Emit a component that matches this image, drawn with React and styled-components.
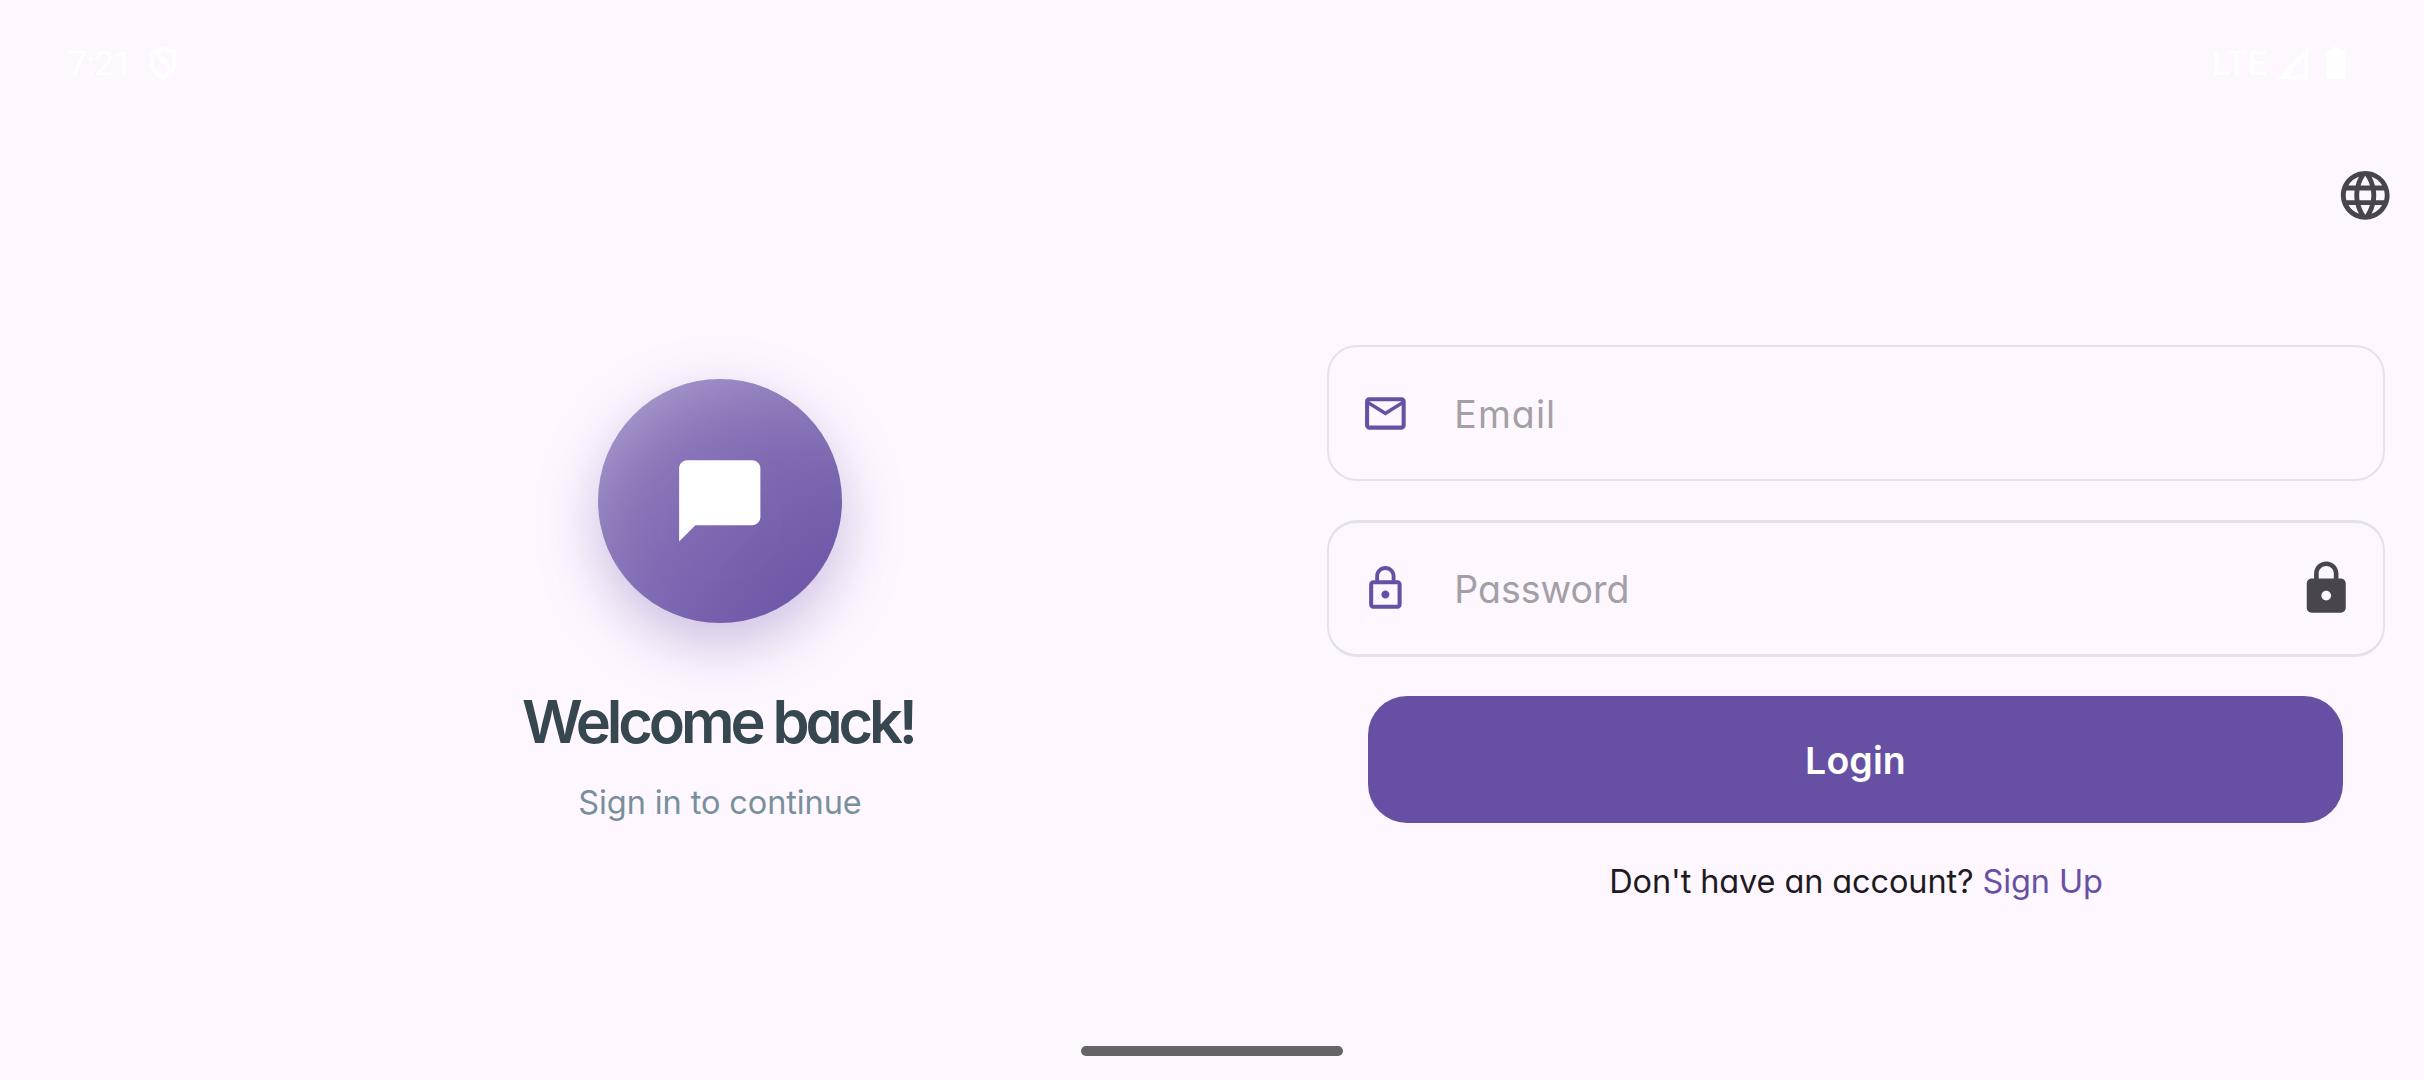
import React from "react";
import styled, { createGlobalStyle } from "styled-components";
import { MdChatBubble, MdLanguage, MdLock, MdLockOutline, MdMailOutline } from "react-icons/md";

const GlobalStyle = createGlobalStyle`
  *, *::before, *::after { box-sizing: border-box; }
  body { margin: 0; background: #fef7ff; }
`;

const Screen = styled.div`
  display: flex;
  flex-direction: column;
  width: 2424px;
  height: 1080px;
  overflow: hidden;
  background: #fef7ff;
  font-family: Inter, "Open Sans", sans-serif;
  font-feature-settings: "cv11" 1;
`;

const StatusBar = styled.header`
  display: flex;
  justify-content: space-between;
  align-items: center;
  height: 126px;
  padding: 0 79px 0 68px;
  color: #fff;
  font-family: Roboto, sans-serif;
  font-size: 34px;
  line-height: 40px;
`;

const StatusGroup = styled.div`
  display: flex;
  align-items: center;
  gap: ${(p) => p.$gap}px;
`;

const StatusText = styled.span`
  font-weight: ${(p) => p.$weight || 400};
  letter-spacing: ${(p) => p.$spacing || 0}px;
`;

const Toolbar = styled.div`
  display: flex;
  justify-content: flex-end;
  align-items: center;
  height: 139px;
  padding-right: 29.5px;
`;

const IconButton = styled.button`
  display: flex;
  padding: 0;
  border: 0;
  background: none;
  color: #49454f;
`;

const Main = styled.main`
  display: grid;
  grid-template-columns: 1214px 1058px;
  padding-left: 113px;
`;

const Welcome = styled.section`
  display: flex;
  flex-direction: column;
  align-items: center;
  padding-top: 114px;
`;

const Logo = styled.div`
  position: relative;
  isolation: isolate;
  display: flex;
  align-items: center;
  justify-content: center;
  width: 244px;
  height: 244px;
  border-radius: 50%;
  color: #fff;
  background: linear-gradient(135deg, rgba(103, 80, 164, 0.5), rgb(103, 80, 164));

  &::before {
    content: "";
    position: absolute;
    z-index: -1;
    inset: 21px 0 -21px;
    border-radius: 50%;
    background: rgba(103, 80, 164, 0.34);
    filter: blur(30px);
  }
`;

const Title = styled.h1`
  margin: 59px 0 0;
  color: #37474f;
  font-size: 59.5px;
  font-weight: 600;
  line-height: 78px;
  letter-spacing: ${(p) => p.$spacing}px;
  text-indent: ${(p) => p.$spacing}px;
  white-space: nowrap;
`;

const Subtitle = styled.p`
  margin: 21px 0 0;
  color: #78909c;
  font-size: 32.5px;
  line-height: 44px;
  letter-spacing: ${(p) => p.$spacing}px;
  white-space: nowrap;
`;

const Form = styled.section`
  display: flex;
  flex-direction: column;
  padding-top: 80px;
`;

const Field = styled.div`
  display: flex;
  align-items: center;
  height: ${(p) => p.$height}px;
  margin-bottom: 39px;
  padding: 0 28px 0 32px;
  border: 2px solid #e6e0e9;
  border-block-width: ${(p) => p.$edge}px;
  border-radius: 30px;
  color: #6750a4;
`;

const Placeholder = styled.span`
  flex: 1;
  margin-left: 44.5px;
  padding-top: 3px;
  color: #a49fa7;
  font-size: 37.5px;
  line-height: 50px;
  letter-spacing: ${(p) => p.$spacing}px;
`;

const LoginButton = styled.button`
  height: 127px;
  margin: 0 42px 0 41px;
  padding: 3px 0 0;
  border: 0;
  border-radius: 39px;
  background: #6750a4;
  color: #fff;
  font: inherit;
  font-feature-settings: inherit;
  font-size: 37.5px;
  font-weight: 600;
  line-height: 50px;
  letter-spacing: ${(p) => p.$spacing}px;
`;

const SignUpLine = styled.p`
  margin: 37px 0 0;
  text-align: center;
  color: #1d1b20;
  font-size: 32.5px;
  line-height: 44px;
  letter-spacing: ${(p) => p.$spacing}px;
  white-space: nowrap;
`;

const SignUpLink = styled.a`
  color: #6750a4;
`;

const HomeIndicator = styled.div`
  width: 262px;
  height: 10px;
  margin: auto auto 24px;
  border-radius: 5px;
  background: #666467;
`;

const ShieldIcon = () => (
  <svg width="28" height="34" viewBox="0 0 28 34" fill="none" stroke="currentColor" strokeWidth="3.6">
    <path d="M14 2.4 25.4 6.4V16c0 7-4.6 12.400-11.400 15.200C7.200 28.400 2.600 23 2.600 16V6.400Z" />
    <path d="M8.500 4.500c0 11 12 10 12 21.500" />
  </svg>
);

const SignalIcon = () => (
  <svg width="31" height="31" viewBox="0 0 31 31" fill="currentColor">
    <path fillRule="evenodd" d="M31 0V31H0ZM27.500 8.500 14 22V27.500H27.500Z" />
  </svg>
);

const BatteryIcon = () => (
  <svg width="19" height="32" viewBox="0 0 19 32" fill="currentColor">
    <path d="M6 0h7v3h4a2 2 0 0 1 2 2v25a2 2 0 0 1-2 2H2a2 2 0 0 1-2-2V5a2 2 0 0 1 2-2h4Z" />
  </svg>
);

export default function App() {
  return (
    <>
      <GlobalStyle />
      <Screen>
        <StatusBar>
          <StatusGroup $gap={17}>
            <StatusText $spacing={-0.3}>7:21</StatusText>
            <ShieldIcon />
          </StatusGroup>
          <StatusGroup $gap={18}>
            <StatusGroup $gap={10}>
              <StatusText $weight={500} $spacing={0.3}>LTE</StatusText>
              <SignalIcon />
            </StatusGroup>
            <BatteryIcon />
          </StatusGroup>
        </StatusBar>
        <Toolbar>
          <IconButton aria-label="Language">
            <MdLanguage size={58.5} />
          </IconButton>
        </Toolbar>
        <Main>
          <Welcome>
            <Logo>
              <MdChatBubble size={97.5} />
            </Logo>
            <Title $spacing={-4.1}>Welcome back!</Title>
            <Subtitle $spacing={-0.1}>Sign in to continue</Subtitle>
          </Welcome>
          <Form>
            <Field $height={136} $edge={2}>
              <MdMailOutline size={48.75} />
              <Placeholder $spacing={1.1}>Email</Placeholder>
            </Field>
            <Field $height={137} $edge={3}>
              <MdLockOutline size={48.75} />
              <Placeholder $spacing={0}>Password</Placeholder>
              <IconButton aria-label="Show password">
                <MdLock size={58.5} />
              </IconButton>
            </Field>
            <LoginButton $spacing={0.1}>Login</LoginButton>
            <SignUpLine $spacing={-0.12}>
              Don't have an account? <SignUpLink>Sign Up</SignUpLink>
            </SignUpLine>
          </Form>
        </Main>
        <HomeIndicator />
      </Screen>
    </>
  );
}
